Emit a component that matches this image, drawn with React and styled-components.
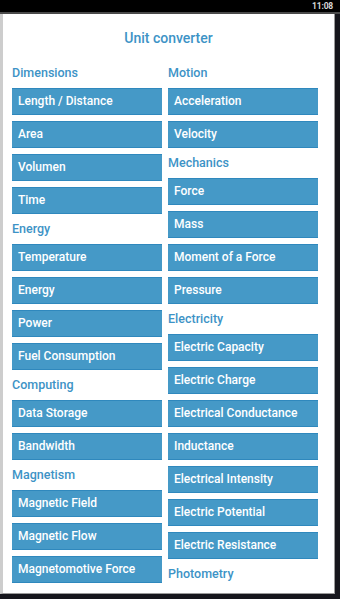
import React from "react";
import styled, { createGlobalStyle } from "styled-components";

const Global = createGlobalStyle`
  html, body { margin: 0; padding: 0; background: #15151b; }
  * { box-sizing: border-box; }
`;

const Frame = styled.div`
  width: 340px;
  height: 599px;
  background: #16161c;
  display: flex;
  flex-direction: column;
  overflow: hidden;
  font-family: Roboto, "Noto Sans", "Liberation Sans", sans-serif;
`;

const StatusBar = styled.div`
  height: 14px;
  flex: none;
  background: #000;
  border-bottom: 2px solid #4a4a4a;
  display: flex;
  justify-content: flex-end;
  align-items: center;
  padding-right: 7px;
`;

const Clock = styled.span`
  color: #d8d8d8;
  font-size: 8.5px;
  font-weight: 700;
  line-height: 12px;
  letter-spacing: -0.2px;
`;

const Screen = styled.div`
  flex: 1;
  min-height: 0;
  margin: 0 5px 5px 0;
  background: #fff;
  border-left: 3px solid #cdcdcd;
  border-right: 1px solid #9a9a9a;
  border-bottom: 1px solid #9a9a9a;
  padding: 14px 0 0 9px;
  overflow: hidden;
`;

const Title = styled.h1`
  margin: 0 0 16px;
  padding-right: 9px;
  text-align: center;
  font-size: 14px;
  line-height: 20px;
  font-weight: 500;
  color: #3d93c6;
`;

const Columns = styled.div`
  display: grid;
  grid-template-columns: 150px 150px;
  column-gap: 6px;
  align-items: start;
`;

const Column = styled.div`
  display: flex;
  flex-direction: column;
  gap: 6px;
`;

const Header = styled.div`
  height: 18px;
  line-height: 18px;
  font-size: 12.5px;
  font-weight: 500;
  color: #3d93c6;
`;

const Item = styled.div`
  height: 27px;
  background: #4599c7;
  border-top: 1px solid #2f88bd;
  border-bottom: 1px solid #2f88bd;
  color: #fff;
  font-size: 12px;
  font-weight: 500;
  line-height: 25px;
  padding-left: 6px;
  white-space: nowrap;
  overflow: hidden;
`;

const left = [
  ["h", "Dimensions"],
  ["b", "Length / Distance"],
  ["b", "Area"],
  ["b", "Volumen"],
  ["b", "Time"],
  ["h", "Energy"],
  ["b", "Temperature"],
  ["b", "Energy"],
  ["b", "Power"],
  ["b", "Fuel Consumption"],
  ["h", "Computing"],
  ["b", "Data Storage"],
  ["b", "Bandwidth"],
  ["h", "Magnetism"],
  ["b", "Magnetic Field"],
  ["b", "Magnetic Flow"],
  ["b", "Magnetomotive Force"],
];

const right = [
  ["h", "Motion"],
  ["b", "Acceleration"],
  ["b", "Velocity"],
  ["h", "Mechanics"],
  ["b", "Force"],
  ["b", "Mass"],
  ["b", "Moment of a Force"],
  ["b", "Pressure"],
  ["h", "Electricity"],
  ["b", "Electric Capacity"],
  ["b", "Electric Charge"],
  ["b", "Electrical Conductance"],
  ["b", "Inductance"],
  ["b", "Electrical Intensity"],
  ["b", "Electric Potential"],
  ["b", "Electric Resistance"],
  ["h", "Photometry"],
];

const renderCol = (list) =>
  list.map(([k, t], i) =>
    k === "h" ? <Header key={i}>{t}</Header> : <Item key={i}>{t}</Item>
  );

export default function App() {
  return (
    <>
      <Global />
      <Frame>
        <StatusBar>
          <Clock>11:08</Clock>
        </StatusBar>
        <Screen>
          <Title>Unit converter</Title>
          <Columns>
            <Column>{renderCol(left)}</Column>
            <Column>{renderCol(right)}</Column>
          </Columns>
        </Screen>
      </Frame>
    </>
  );
}
